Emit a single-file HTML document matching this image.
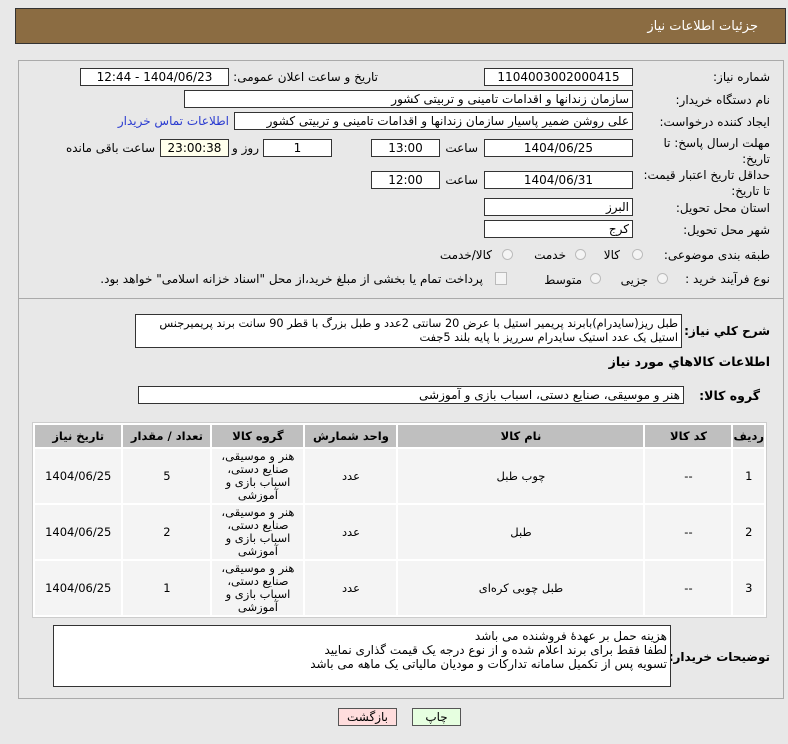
<!DOCTYPE html>
<html><head><meta charset="utf-8"><style>
body{margin:0;width:788px;height:744px;background:#e8e8e8;font-family:"DejaVu Sans","Liberation Sans",sans-serif;font-size:12px;color:#000;position:relative;overflow:hidden;direction:rtl}
.a{position:absolute;white-space:nowrap}
.box{position:absolute;background:#fff;border:1px solid #333;box-sizing:border-box;height:18px;line-height:16px;text-align:center;font-size:12px}
.r{text-align:right;padding-right:3px}
.lbl{position:absolute;white-space:nowrap;text-align:right}
.b{font-weight:bold}
.rad{position:absolute;width:11px;height:11px;border-radius:50%;border:1px solid #bbb;background:#f4f4f4;box-sizing:border-box}
table{position:absolute;left:32px;top:422px;width:735px;border-collapse:separate;border-spacing:2px;border:1px solid #ccc;background:#fff}
td,th{text-align:center;font-size:11.5px;padding:0}
th{background:#bfbfbf;height:22px;font-weight:bold}
td{background:#f4f4f4;height:54px;line-height:13px}
.btn{position:absolute;top:708px;height:18px;border:1px solid #555;box-sizing:border-box;text-align:center;line-height:16px}
</style></head><body>
<div class="a" style="left:15px;top:8px;width:771px;height:36px;background:#8b6c42;border:1px solid #333;box-sizing:border-box"></div>
<div class="a" style="right:30px;top:19px;color:#fff;font-size:13px">جزئیات اطلاعات نیاز</div>
<div class="a" style="left:18px;top:60px;width:766px;height:639px;border:1px solid #aaa;box-sizing:border-box"></div>
<div class="a" style="left:18px;top:298px;width:766px;height:1px;background:#aaa"></div>

<div class="lbl" style="right:18px;top:70px">شماره نیاز:</div>
<div class="box" style="left:484px;top:68px;width:149px">1104003002000415</div>
<div class="lbl" style="right:410px;top:70px">تاریخ و ساعت اعلان عمومی:</div>
<div class="box" style="left:80px;top:68px;width:149px">1404/06/23 - 12:44</div>

<div class="lbl" style="right:18px;top:93px">نام دستگاه خریدار:</div>
<div class="box r" style="left:184px;top:90px;width:449px">سازمان زندانها و اقدامات تامینی و تربیتی کشور</div>

<div class="lbl" style="right:18px;top:115px">ایجاد کننده درخواست:</div>
<div class="box r" style="left:234px;top:112px;width:399px">علی روشن ضمیر پاسیار سازمان زندانها و اقدامات تامینی و تربیتی کشور</div>
<div class="lbl" style="right:559px;top:114px;color:#2a3bd0">اطلاعات تماس خریدار</div>

<div class="lbl" style="right:18px;top:135px;line-height:16px">مهلت ارسال پاسخ: تا<br>تاریخ:</div>
<div class="box" style="left:484px;top:139px;width:149px">1404/06/25</div>
<div class="lbl" style="right:310px;top:141px">ساعت</div>
<div class="box" style="left:371px;top:139px;width:69px">13:00</div>
<div class="box" style="left:263px;top:139px;width:69px">1</div>
<div class="lbl" style="right:529px;top:141px">روز و</div>
<div class="box" style="left:160px;top:139px;width:69px;background:#ffffec">23:00:38</div>
<div class="lbl" style="right:633px;top:141px">ساعت باقی مانده</div>

<div class="lbl" style="right:18px;top:167px;line-height:16px">حداقل تاریخ اعتبار قیمت:<br>تا تاریخ:</div>
<div class="box" style="left:484px;top:171px;width:149px">1404/06/31</div>
<div class="lbl" style="right:310px;top:173px">ساعت</div>
<div class="box" style="left:371px;top:171px;width:69px">12:00</div>

<div class="lbl" style="right:18px;top:201px">استان محل تحویل:</div>
<div class="box r" style="left:484px;top:198px;width:149px">البرز</div>
<div class="lbl" style="right:18px;top:223px">شهر محل تحویل:</div>
<div class="box r" style="left:484px;top:220px;width:149px">کرج</div>

<div class="lbl" style="right:18px;top:248px">طبقه بندی موضوعی:</div>
<div class="rad" style="left:632px;top:249px"></div><div class="lbl" style="right:168px;top:248px">کالا</div>
<div class="rad" style="left:575px;top:249px"></div><div class="lbl" style="right:222px;top:248px">خدمت</div>
<div class="rad" style="left:502px;top:249px"></div><div class="lbl" style="right:296px;top:248px">کالا/خدمت</div>

<div class="lbl" style="right:18px;top:272px">نوع فرآیند خرید :</div>
<div class="rad" style="left:657px;top:273px"></div><div class="lbl" style="right:140px;top:273px">جزیی</div>
<div class="rad" style="left:590px;top:273px"></div><div class="lbl" style="right:206px;top:273px">متوسط</div>
<div class="a" style="left:495px;top:272px;width:10px;height:11px;border:1px solid #bbb;background:#f4f4f4"></div>
<div class="lbl" style="right:305px;top:272px">پرداخت تمام یا بخشی از مبلغ خرید،از محل "اسناد خزانه اسلامی" خواهد بود.</div>

<div class="lbl b" style="right:18px;top:324px">شرح کلي نیاز:</div>
<div class="a" style="left:135px;top:314px;width:547px;height:34px;background:#fff;border:1px solid #333;box-sizing:border-box;white-space:normal;text-align:right;padding:2px 3px;line-height:14px;font-size:11.3px;letter-spacing:-0.2px">طبل ریز(سایدرام)بابرند پریمیر استیل با عرض 20 سانتی 2عدد و طبل بزرگ با قطر 90 سانت برند پریمیرجنس استیل یک عدد استیک سایدرام سرریز با پایه بلند 5جفت</div>
<div class="lbl b" style="right:18px;top:354px;font-size:12.5px">اطلاعات کالاهاي مورد نیاز</div>

<div class="lbl b" style="right:28px;top:388px;font-size:12.5px">گروه کالا:</div>
<div class="box r" style="left:138px;top:386px;width:546px">هنر و موسیقی، صنایع دستی، اسباب بازی و آموزشی</div>

<table><tr><th style="width:27px">ردیف</th><th style="width:86px">کد کالا</th><th style="width:245px">نام کالا</th><th style="width:91px">واحد شمارش</th><th style="width:91px">گروه کالا</th><th style="width:87px">تعداد / مقدار</th><th>تاریخ نیاز</th></tr>
<tr><td>1</td><td>--</td><td>چوب طبل</td><td>عدد</td><td>هنر و موسیقی،<br>صنایع دستی،<br>اسباب بازی و<br>آموزشی</td><td>5</td><td>1404/06/25</td></tr>
<tr><td>2</td><td>--</td><td>طبل</td><td>عدد</td><td>هنر و موسیقی،<br>صنایع دستی،<br>اسباب بازی و<br>آموزشی</td><td>2</td><td>1404/06/25</td></tr>
<tr><td>3</td><td>--</td><td>طبل چوبی کره‌ای</td><td>عدد</td><td>هنر و موسیقی،<br>صنایع دستی،<br>اسباب بازی و<br>آموزشی</td><td>1</td><td>1404/06/25</td></tr>
</table>

<div class="lbl b" style="right:18px;top:650px">توضیحات خریدار:</div>
<div class="a" style="left:53px;top:625px;width:618px;height:62px;background:#fff;border:1px solid #333;box-sizing:border-box;white-space:normal;text-align:right;padding:3px 3px;line-height:14px">هزینه حمل بر عهدهٔ فروشنده می باشد<br>لطفا فقط برای برند اعلام شده و از نوع درجه یک قیمت گذاری نمایید<br>تسویه پس از تکمیل سامانه تدارکات و مودیان مالیاتی یک ماهه می باشد</div>

<div class="btn" style="left:338px;width:59px;background:#fdd">بازگشت</div>
<div class="btn" style="left:412px;width:49px;background:#e6ffe0">چاپ</div>
</body></html>
